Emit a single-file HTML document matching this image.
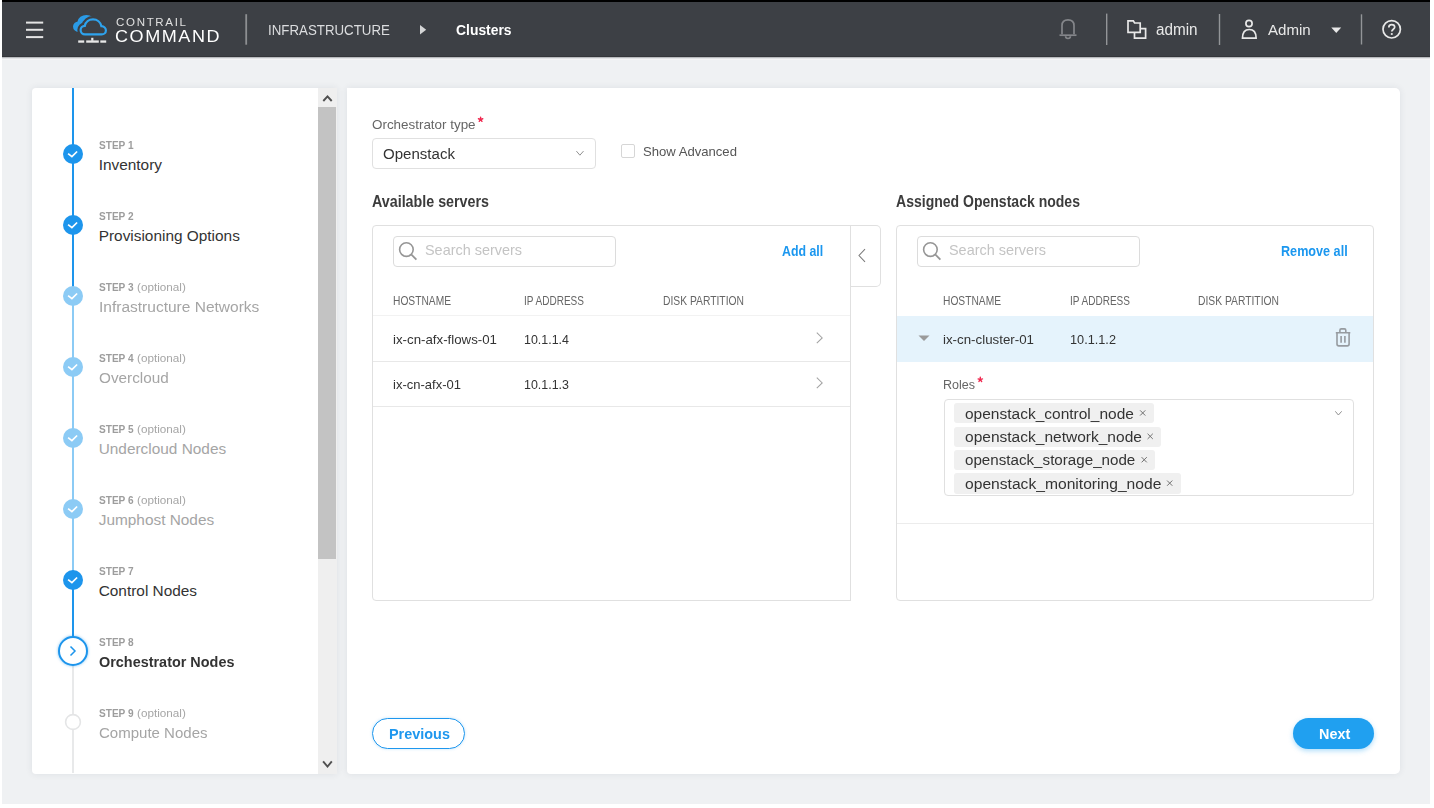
<!DOCTYPE html>
<html><head><meta charset="utf-8"><style>
html,body{margin:0;padding:0;background:#fff;width:1434px;height:808px;overflow:hidden;position:relative}
.t{position:absolute;white-space:nowrap;font-family:"Liberation Sans",sans-serif;line-height:1;transform-origin:0 0}
div{box-sizing:border-box}
</style></head><body>
<div style="position:absolute;left:2px;top:0px;width:1428px;height:2px;background:#000"></div>
<div style="position:absolute;left:2px;top:2px;width:1428px;height:55px;background:#3d4045"></div>
<div style="position:absolute;left:2px;top:56px;width:1428px;height:1px;background:#34363a"></div>
<svg style="position:absolute;left:0;top:0" width="1434" height="57" viewBox="0 0 1434 57">
<g fill="#e4e4e4">
<rect x="26" y="21.6" width="17.2" height="2"/><rect x="26" y="28.8" width="17.2" height="2"/><rect x="26" y="36.1" width="17.2" height="2"/>
</g>
<path transform="translate(-6.6 -3.5)" d="M85 34.4 C82.5 34.4 80.6 32.5 80.6 30.1 C80.6 27.8 82.5 25.9 84.8 25.9 C85.5 21.8 89 19.4 93 19.4 C97.2 19.4 100.6 22.2 101.4 26.2 C104 26.4 105.9 28.2 105.9 30.4 C105.9 32.7 104 34.4 101.7 34.4 Z" fill="#2b9be6" stroke="#2b9be6" stroke-width="2"/>
<path d="M85 34.4 C82.5 34.4 80.6 32.5 80.6 30.1 C80.6 27.8 82.5 25.9 84.8 25.9 C85.5 21.8 89 19.4 93 19.4 C97.2 19.4 100.6 22.2 101.4 26.2 C104 26.4 105.9 28.2 105.9 30.4 C105.9 32.7 104 34.4 101.7 34.4 Z" fill="#3d4045" stroke="#3d4045" stroke-width="6.6"/>
<path d="M85 34.4 C82.5 34.4 80.6 32.5 80.6 30.1 C80.6 27.8 82.5 25.9 84.8 25.9 C85.5 21.8 89 19.4 93 19.4 C97.2 19.4 100.6 22.2 101.4 26.2 C104 26.4 105.9 28.2 105.9 30.4 C105.9 32.7 104 34.4 101.7 34.4 Z" fill="none" stroke="#2ea3ee" stroke-width="2.2"/>
<g fill="#e8e8e8">
<rect x="78.2" y="40.4" width="6" height="2.3"/><rect x="86.2" y="40.4" width="12.6" height="2.3"/><rect x="91.2" y="37.8" width="2.2" height="3"/><rect x="100.3" y="40.4" width="5.9" height="2.3"/>
</g>
<rect x="245.3" y="14.2" width="1.8" height="30.5" fill="#8d8f92"/>
<path d="M420 25 L426.2 29.8 L420 34.6 Z" fill="#d4d5d6"/>
<g fill="none" stroke="#84868a" stroke-width="1.7">
<path d="M1062 34.2 V25.5 C1062 21.5 1064.3 19.8 1068 19.8 C1071.7 19.8 1074 21.5 1074 25.5 V34.2"/>
<path d="M1059.5 35.2 H1076.5"/>
<path d="M1065.6 36.3 C1065.6 39.2 1070.4 39.2 1070.4 36.3"/>
</g>
<g fill="#939598"><rect x="1106" y="13.6" width="1.4" height="31.4"/><rect x="1218.8" y="14" width="1.4" height="31"/><rect x="1360.8" y="14.3" width="1.4" height="30.2"/></g>
<g fill="none" stroke="#e8e8e8" stroke-width="1.7">
<path d="M1128 32.3 V20.8 H1133.3 L1134.6 23 H1140.2 V32.3 Z"/>
<path d="M1134.5 32.3 V38.1 H1145.6 V28.6 H1140.2"/>
<circle cx="1249" cy="23.5" r="3.1"/>
<path d="M1242.5 38.1 C1242.5 32.2 1245.2 29.5 1249.3 29.5 C1253.5 29.5 1256.1 32.2 1256.1 38.1 Z"/>
<circle cx="1391.7" cy="29.3" r="8.7"/>
<path d="M1388.8 27.4 C1388.8 25.5 1390.1 24.6 1391.7 24.6 C1393.4 24.6 1394.7 25.6 1394.7 27.1 C1394.7 29.2 1391.8 29.3 1391.8 31.6"/>
</g>
<circle cx="1391.8" cy="34" r="1.1" fill="#e8e8e8"/>
<path d="M1331.3 27.5 H1341.2 L1336.25 33.1 Z" fill="#e8e8e8"/>
</svg>
<div class="t" style="left:115.80px;top:16.620px;font-size:11px;color:#e0e0e0;letter-spacing:1.6px;transform:scaleX(1.0476);">CONTRAIL</div>
<div class="t" style="left:114.80px;top:28.020px;font-size:17.3px;color:#ffffff;letter-spacing:1.5px;transform:scaleX(1.0429);">COMMAND</div>
<div class="t" style="left:267.60px;top:21.920px;font-size:15.2px;color:#dcdddf;transform:scaleX(0.8756);">INFRASTRUCTURE</div>
<div class="t" style="left:456.40px;top:23.020px;font-size:14.8px;color:#ffffff;font-weight:700;transform:scaleX(0.9388);">Clusters</div>
<div class="t" style="left:1155.50px;top:21.820px;font-size:15.8px;color:#e8e8e8;transform:scaleX(0.9667);">admin</div>
<div class="t" style="left:1267.50px;top:21.820px;font-size:15.2px;color:#e8e8e8;transform:scaleX(0.9934);">Admin</div>
<div style="position:absolute;left:2px;top:57px;width:1428px;height:747px;background:#eff1f3"></div>
<div style="position:absolute;left:2px;top:57px;width:1428px;height:1px;background:#b9bbbe"></div>
<div style="position:absolute;left:2px;top:58px;width:1428px;height:1px;background:#e3e4e6"></div>
<div style="position:absolute;left:2px;top:59px;width:1428px;height:1px;background:#f4f5f6"></div>
<div style="position:absolute;left:32px;top:88px;width:305px;height:686px;background:#fff;border-radius:4px 0 0 4px;box-shadow:0 0 7px rgba(40,60,80,0.09)"></div>
<div style="position:absolute;left:318px;top:88px;width:19px;height:686px;background:#efefef"></div>
<div style="position:absolute;left:318px;top:107px;width:18px;height:452px;background:#c3c3c3"></div>
<svg style="position:absolute;left:322px;top:94px" width="11" height="8"><path d="M1.3 7 L5.5 2.4 L9.7 7" fill="none" stroke="#505050" stroke-width="1.9"/></svg>
<svg style="position:absolute;left:322px;top:760px" width="11" height="9"><path d="M1.1 1.4 L5.5 6.6 L9.8 1.4" fill="none" stroke="#505050" stroke-width="1.9"/></svg>
<div style="position:absolute;left:72px;top:88px;width:2px;height:207px;background:#1d95ec"></div>
<div style="position:absolute;left:72px;top:295px;width:2px;height:283px;background:#8ccbf5"></div>
<div style="position:absolute;left:72px;top:579px;width:2px;height:71px;background:#1d95ec"></div>
<div style="position:absolute;left:72px;top:650px;width:2px;height:123px;background:#e8e9ea"></div>
<svg style="position:absolute;left:63px;top:143.8px" width="20" height="20" viewBox="0 0 20 20"><circle cx="10" cy="10" r="10" fill="#1d95ec"/><path d="M5.1 9.7 L8.9 12.7 L14.1 7.5" fill="none" stroke="#fff" stroke-width="1.7"/></svg>
<div class="t" style="left:98.80px;top:140.020px;font-size:11.2px;color:#9d9d9d;font-weight:700;transform:scaleX(0.9013);">STEP 1</div>
<div class="t" style="left:98.70px;top:157.020px;font-size:15.4px;color:#333333;">Inventory</div>
<svg style="position:absolute;left:63px;top:214.8px" width="20" height="20" viewBox="0 0 20 20"><circle cx="10" cy="10" r="10" fill="#1d95ec"/><path d="M5.1 9.7 L8.9 12.7 L14.1 7.5" fill="none" stroke="#fff" stroke-width="1.7"/></svg>
<div class="t" style="left:98.80px;top:211.020px;font-size:11.2px;color:#9d9d9d;font-weight:700;transform:scaleX(0.9013);">STEP 2</div>
<div class="t" style="left:98.70px;top:228.020px;font-size:15.4px;color:#333333;">Provisioning Options</div>
<svg style="position:absolute;left:63px;top:285.8px" width="20" height="20" viewBox="0 0 20 20"><circle cx="10" cy="10" r="10" fill="#8ccbf5"/><path d="M5.1 9.7 L8.9 12.7 L14.1 7.5" fill="none" stroke="#fff" stroke-width="1.7"/></svg>
<div class="t" style="left:98.80px;top:282.020px;font-size:11.2px;color:#9d9d9d;font-weight:700;transform:scaleX(0.9013);">STEP 3</div>
<div class="t" style="left:137.20px;top:281.020px;font-size:11.6px;color:#a6a6a6;transform:scaleX(1.0091);">(optional)</div>
<div class="t" style="left:98.70px;top:299.020px;font-size:15.4px;color:#a5a5a5;transform:scaleX(1.0077);">Infrastructure Networks</div>
<svg style="position:absolute;left:63px;top:356.8px" width="20" height="20" viewBox="0 0 20 20"><circle cx="10" cy="10" r="10" fill="#8ccbf5"/><path d="M5.1 9.7 L8.9 12.7 L14.1 7.5" fill="none" stroke="#fff" stroke-width="1.7"/></svg>
<div class="t" style="left:98.80px;top:353.020px;font-size:11.2px;color:#9d9d9d;font-weight:700;transform:scaleX(0.9013);">STEP 4</div>
<div class="t" style="left:137.20px;top:352.020px;font-size:11.6px;color:#a6a6a6;transform:scaleX(1.0091);">(optional)</div>
<div class="t" style="left:98.70px;top:370.020px;font-size:15.4px;color:#a5a5a5;transform:scaleX(0.9945);">Overcloud</div>
<svg style="position:absolute;left:63px;top:427.8px" width="20" height="20" viewBox="0 0 20 20"><circle cx="10" cy="10" r="10" fill="#8ccbf5"/><path d="M5.1 9.7 L8.9 12.7 L14.1 7.5" fill="none" stroke="#fff" stroke-width="1.7"/></svg>
<div class="t" style="left:98.80px;top:424.020px;font-size:11.2px;color:#9d9d9d;font-weight:700;transform:scaleX(0.9013);">STEP 5</div>
<div class="t" style="left:137.20px;top:423.020px;font-size:11.6px;color:#a6a6a6;transform:scaleX(1.0091);">(optional)</div>
<div class="t" style="left:98.70px;top:441.020px;font-size:15.4px;color:#a5a5a5;">Undercloud Nodes</div>
<svg style="position:absolute;left:63px;top:498.8px" width="20" height="20" viewBox="0 0 20 20"><circle cx="10" cy="10" r="10" fill="#8ccbf5"/><path d="M5.1 9.7 L8.9 12.7 L14.1 7.5" fill="none" stroke="#fff" stroke-width="1.7"/></svg>
<div class="t" style="left:98.80px;top:495.020px;font-size:11.2px;color:#9d9d9d;font-weight:700;transform:scaleX(0.9013);">STEP 6</div>
<div class="t" style="left:137.20px;top:494.020px;font-size:11.6px;color:#a6a6a6;transform:scaleX(1.0091);">(optional)</div>
<div class="t" style="left:98.70px;top:512.020px;font-size:15.4px;color:#a5a5a5;">Jumphost Nodes</div>
<svg style="position:absolute;left:63px;top:569.8px" width="20" height="20" viewBox="0 0 20 20"><circle cx="10" cy="10" r="10" fill="#1d95ec"/><path d="M5.1 9.7 L8.9 12.7 L14.1 7.5" fill="none" stroke="#fff" stroke-width="1.7"/></svg>
<div class="t" style="left:98.80px;top:566.020px;font-size:11.2px;color:#9d9d9d;font-weight:700;transform:scaleX(0.9013);">STEP 7</div>
<div class="t" style="left:98.70px;top:583.020px;font-size:15.4px;color:#333333;">Control Nodes</div>
<svg style="position:absolute;left:57px;top:634.8px;filter:drop-shadow(0 0 1.5px rgba(29,149,236,0.55))" width="32" height="32" viewBox="0 0 32 32"><circle cx="16" cy="16" r="14" fill="#fff" stroke="#1d95ec" stroke-width="2"/><path d="M13.5 11.5 L18 16 L13.5 20.5" fill="none" stroke="#1d95ec" stroke-width="1.5"/></svg>
<div class="t" style="left:98.80px;top:637.020px;font-size:11.2px;color:#9d9d9d;font-weight:700;transform:scaleX(0.9013);">STEP 8</div>
<div class="t" style="left:98.70px;top:654.020px;font-size:15.4px;color:#333333;font-weight:700;transform:scaleX(0.9369);">Orchestrator Nodes</div>
<svg style="position:absolute;left:64px;top:712.8px" width="18" height="18" viewBox="0 0 18 18"><circle cx="9" cy="9" r="7.4" fill="#fff" stroke="#e4e5e6" stroke-width="1.6"/></svg>
<div class="t" style="left:98.80px;top:708.020px;font-size:11.2px;color:#9d9d9d;font-weight:700;transform:scaleX(0.9013);">STEP 9</div>
<div class="t" style="left:137.20px;top:707.020px;font-size:11.6px;color:#a6a6a6;transform:scaleX(1.0091);">(optional)</div>
<div class="t" style="left:98.70px;top:725.020px;font-size:15.4px;color:#a5a5a5;transform:scaleX(0.9759);">Compute Nodes</div>
<div style="position:absolute;left:347px;top:88px;width:1052.5px;height:686px;background:#fff;border-radius:0 5px 5px 4px;box-shadow:0 0 7px rgba(40,60,80,0.09)"></div>
<div class="t" style="left:372.30px;top:119.020px;font-size:12.8px;color:#666666;transform:scaleX(1.0477);">Orchestrator type</div>
<svg style="position:absolute;left:0;top:0;overflow:visible" width="1" height="1"><path d="M480.60 119.50 L480.60 117.20 M480.60 119.50 L482.79 118.79 M480.60 119.50 L481.95 121.36 M480.60 119.50 L479.25 121.36 M480.60 119.50 L478.41 118.79 " stroke="#f0284f" stroke-width="1.4" stroke-linecap="round" fill="none"/></svg>
<div style="position:absolute;left:372px;top:138px;width:224px;height:31px;border:1px solid #e0e0e0;border-radius:4px;background:#fff"></div>
<div class="t" style="left:383.00px;top:145.620px;font-size:15.4px;color:#333333;transform:scaleX(0.9780);">Openstack</div>
<svg style="position:absolute;left:576px;top:150px" width="9" height="7"><path d="M0.4 1.1 L3.9 5.2 L7.5 1.1" fill="none" stroke="#8a8a8a" stroke-width="0.95"/></svg>
<div style="position:absolute;left:621px;top:144px;width:14px;height:14px;border:1px solid #d6d6d6;border-radius:2px;background:#fff"></div>
<div class="t" style="left:643.00px;top:145.020px;font-size:13.4px;color:#555555;transform:scaleX(0.9781);">Show Advanced</div>
<div class="t" style="left:372.00px;top:194.020px;font-size:15.6px;color:#3c3c3c;font-weight:700;transform:scaleX(0.9156);">Available servers</div>
<div class="t" style="left:896.00px;top:194.020px;font-size:15.6px;color:#3c3c3c;font-weight:700;transform:scaleX(0.8994);">Assigned Openstack nodes</div>
<div style="position:absolute;left:372px;top:225px;width:479px;height:376px;border:1px solid #e0e0e0;border-radius:4px 0 0 4px;background:#fff"></div>
<div style="position:absolute;left:850px;top:225px;width:31px;height:62px;border:1px solid #e0e0e0;border-left:none;border-radius:0 5px 5px 0;background:#fff"></div>
<div style="position:absolute;left:850px;top:225px;width:1px;height:376px;background:#e0e0e0"></div>
<svg style="position:absolute;left:857px;top:248px" width="10" height="15"><path d="M8 1.2 L2 7.5 L8 13.8" fill="none" stroke="#7a7a7a" stroke-width="1.05"/></svg>
<div style="position:absolute;left:896px;top:225px;width:478px;height:376px;border:1px solid #e0e0e0;border-radius:4px;background:#fff"></div>
<div style="position:absolute;left:393px;top:236px;width:223px;height:31px;border:1px solid #dcdcdc;border-radius:4px;background:#fff"></div>
<svg style="position:absolute;left:398px;top:241px" width="22" height="21" viewBox="0 0 22 21"><circle cx="8.4" cy="8.6" r="6.8" fill="none" stroke="#969696" stroke-width="1.6"/><path d="M13.2 13.4 L18.4 18.6" stroke="#969696" stroke-width="1.8"/></svg>
<div class="t" style="left:425.00px;top:242.020px;font-size:15.0px;color:#c4c4c4;transform:scaleX(0.9616);">Search servers</div>
<div class="t" style="left:781.60px;top:244.020px;font-size:14.4px;color:#1b97ef;font-weight:700;transform:scaleX(0.8583);">Add all</div>
<div class="t" style="left:393.00px;top:295.020px;font-size:12.6px;color:#666666;transform:scaleX(0.8123);">HOSTNAME</div>
<div class="t" style="left:524.00px;top:295.020px;font-size:12.6px;color:#666666;transform:scaleX(0.7958);">IP ADDRESS</div>
<div class="t" style="left:662.60px;top:295.020px;font-size:12.6px;color:#666666;transform:scaleX(0.8186);">DISK PARTITION</div>
<div style="position:absolute;left:373px;top:315px;width:477px;height:1px;background:#f2f2f2"></div>
<div class="t" style="left:393.00px;top:333.020px;font-size:13.6px;color:#333333;transform:scaleX(0.9760);">ix-cn-afx-flows-01</div>
<div class="t" style="left:524.00px;top:333.020px;font-size:13.6px;color:#333333;transform:scaleX(0.9155);">10.1.1.4</div>
<svg style="position:absolute;left:816px;top:331.5px" width="9" height="14"><path d="M0.8 0.7 L6.2 5.9 L0.8 11.1" fill="none" stroke="#a3a3a3" stroke-width="1.05"/></svg>
<div style="position:absolute;left:373px;top:361px;width:477px;height:1px;background:#e8e8e8"></div>
<div class="t" style="left:393.00px;top:378.020px;font-size:13.6px;color:#333333;transform:scaleX(0.9572);">ix-cn-afx-01</div>
<div class="t" style="left:524.00px;top:378.020px;font-size:13.6px;color:#333333;transform:scaleX(0.9155);">10.1.1.3</div>
<svg style="position:absolute;left:816px;top:376.5px" width="9" height="14"><path d="M0.8 0.7 L6.2 5.9 L0.8 11.1" fill="none" stroke="#a3a3a3" stroke-width="1.05"/></svg>
<div style="position:absolute;left:373px;top:406px;width:477px;height:1px;background:#e8e8e8"></div>
<div style="position:absolute;left:917px;top:236px;width:223px;height:31px;border:1px solid #dcdcdc;border-radius:4px;background:#fff"></div>
<svg style="position:absolute;left:922px;top:241px" width="22" height="21" viewBox="0 0 22 21"><circle cx="8.4" cy="8.6" r="6.8" fill="none" stroke="#969696" stroke-width="1.6"/><path d="M13.2 13.4 L18.4 18.6" stroke="#969696" stroke-width="1.8"/></svg>
<div class="t" style="left:949.00px;top:242.020px;font-size:15.0px;color:#c4c4c4;transform:scaleX(0.9616);">Search servers</div>
<div class="t" style="left:1280.70px;top:244.020px;font-size:14.4px;color:#1b97ef;font-weight:700;transform:scaleX(0.8772);">Remove all</div>
<div class="t" style="left:943.00px;top:295.020px;font-size:12.6px;color:#666666;transform:scaleX(0.8123);">HOSTNAME</div>
<div class="t" style="left:1070.00px;top:295.020px;font-size:12.6px;color:#666666;transform:scaleX(0.7958);">IP ADDRESS</div>
<div class="t" style="left:1197.50px;top:295.020px;font-size:12.6px;color:#666666;transform:scaleX(0.8186);">DISK PARTITION</div>
<div style="position:absolute;left:897px;top:316px;width:476px;height:46px;background:#e5f3fc"></div>
<svg style="position:absolute;left:918px;top:335px" width="12" height="7"><path d="M0.5 0.5 H11.5 L6 6 Z" fill="#9a9a9a"/></svg>
<div class="t" style="left:943.00px;top:333.020px;font-size:13.6px;color:#333333;transform:scaleX(0.9790);">ix-cn-cluster-01</div>
<div class="t" style="left:1070.00px;top:333.020px;font-size:13.6px;color:#333333;transform:scaleX(0.9358);">10.1.1.2</div>
<svg style="position:absolute;left:1334px;top:327px" width="18" height="21" viewBox="0 0 18 21"><path d="M1.8 5.8 H16.3 M5.9 5.8 V3.3 Q5.9 1.9 7.3 1.9 H10.4 Q11.8 1.9 11.8 3.3 V5.8 M3 5.8 V17 Q3 18.9 4.9 18.9 H13.2 Q15.1 18.9 15.1 17 V5.8 M7.1 8.9 V15.8 M10.9 8.9 V15.8" fill="none" stroke="#969ba0" stroke-width="1.6"/></svg>
<div class="t" style="left:943.00px;top:378.020px;font-size:13.4px;color:#666666;transform:scaleX(0.9341);">Roles</div>
<svg style="position:absolute;left:0;top:0;overflow:visible" width="1" height="1"><path d="M980.20 379.60 L980.30 377.30 M980.20 379.60 L982.49 378.89 M980.20 379.60 L981.65 381.46 M980.20 379.60 L978.95 381.46 M980.20 379.60 L978.11 378.89 " stroke="#f0284f" stroke-width="1.4" stroke-linecap="round" fill="none"/></svg>
<div style="position:absolute;left:944px;top:399px;width:410px;height:97px;border:1px solid #e0e0e0;border-radius:4px;background:#fff"></div>
<svg style="position:absolute;left:1334px;top:410px" width="9" height="7"><path d="M1.3 1.3 L4.4 5 L7.7 1.3" fill="none" stroke="#8a8a8a" stroke-width="0.95"/></svg>
<div style="position:absolute;left:954.2px;top:403.2px;width:199.5px;height:20.2px;background:#f0f0f0;border-radius:3px"></div>
<div class="t" style="left:964.60px;top:406.020px;font-size:15.4px;color:#333333;transform:scaleX(1.0071);">openstack_control_node</div>
<svg style="position:absolute;left:0;top:0;overflow:visible" width="1" height="1"><path d="M1140.10 410.35 L1145.30 415.55 M1145.30 410.35 L1140.10 415.55" stroke="#707070" stroke-width="1"/></svg>
<div style="position:absolute;left:954.2px;top:426.59999999999997px;width:207px;height:20.2px;background:#f0f0f0;border-radius:3px"></div>
<div class="t" style="left:964.60px;top:429.020px;font-size:15.4px;color:#333333;transform:scaleX(1.0085);">openstack_network_node</div>
<svg style="position:absolute;left:0;top:0;overflow:visible" width="1" height="1"><path d="M1147.60 433.75 L1152.80 438.95 M1152.80 433.75 L1147.60 438.95" stroke="#707070" stroke-width="1"/></svg>
<div style="position:absolute;left:954.2px;top:450.0px;width:201px;height:20.2px;background:#f0f0f0;border-radius:3px"></div>
<div class="t" style="left:964.60px;top:452.020px;font-size:15.4px;color:#333333;transform:scaleX(0.9852);">openstack_storage_node</div>
<svg style="position:absolute;left:0;top:0;overflow:visible" width="1" height="1"><path d="M1141.60 457.15 L1146.80 462.35 M1146.80 457.15 L1141.60 462.35" stroke="#707070" stroke-width="1"/></svg>
<div style="position:absolute;left:954.2px;top:473.4px;width:226.5px;height:20.2px;background:#f0f0f0;border-radius:3px"></div>
<div class="t" style="left:964.60px;top:476.020px;font-size:15.4px;color:#333333;transform:scaleX(1.0155);">openstack_monitoring_node</div>
<svg style="position:absolute;left:0;top:0;overflow:visible" width="1" height="1"><path d="M1167.10 480.55 L1172.30 485.75 M1172.30 480.55 L1167.10 485.75" stroke="#707070" stroke-width="1"/></svg>
<div style="position:absolute;left:897px;top:522.5px;width:476px;height:1px;background:#ececec"></div>
<div style="position:absolute;left:372px;top:718px;width:93px;height:31px;border:1px solid #1e97ee;border-radius:16px;background:#fff;box-shadow:0 0 3px rgba(27,147,234,0.25)"></div>
<div class="t" style="left:388.80px;top:727.020px;font-size:14.2px;color:#1e97ee;font-weight:700;transform:scaleX(1.0170);">Previous</div>
<div style="position:absolute;left:1293px;top:718px;width:81px;height:31px;border-radius:16px;background:#20a0f0;box-shadow:0 2px 5px rgba(32,160,240,0.35)"></div>
<div class="t" style="left:1318.60px;top:727.220px;font-size:14.2px;color:#ffffff;font-weight:700;transform:scaleX(1.0137);">Next</div>
</body></html>
